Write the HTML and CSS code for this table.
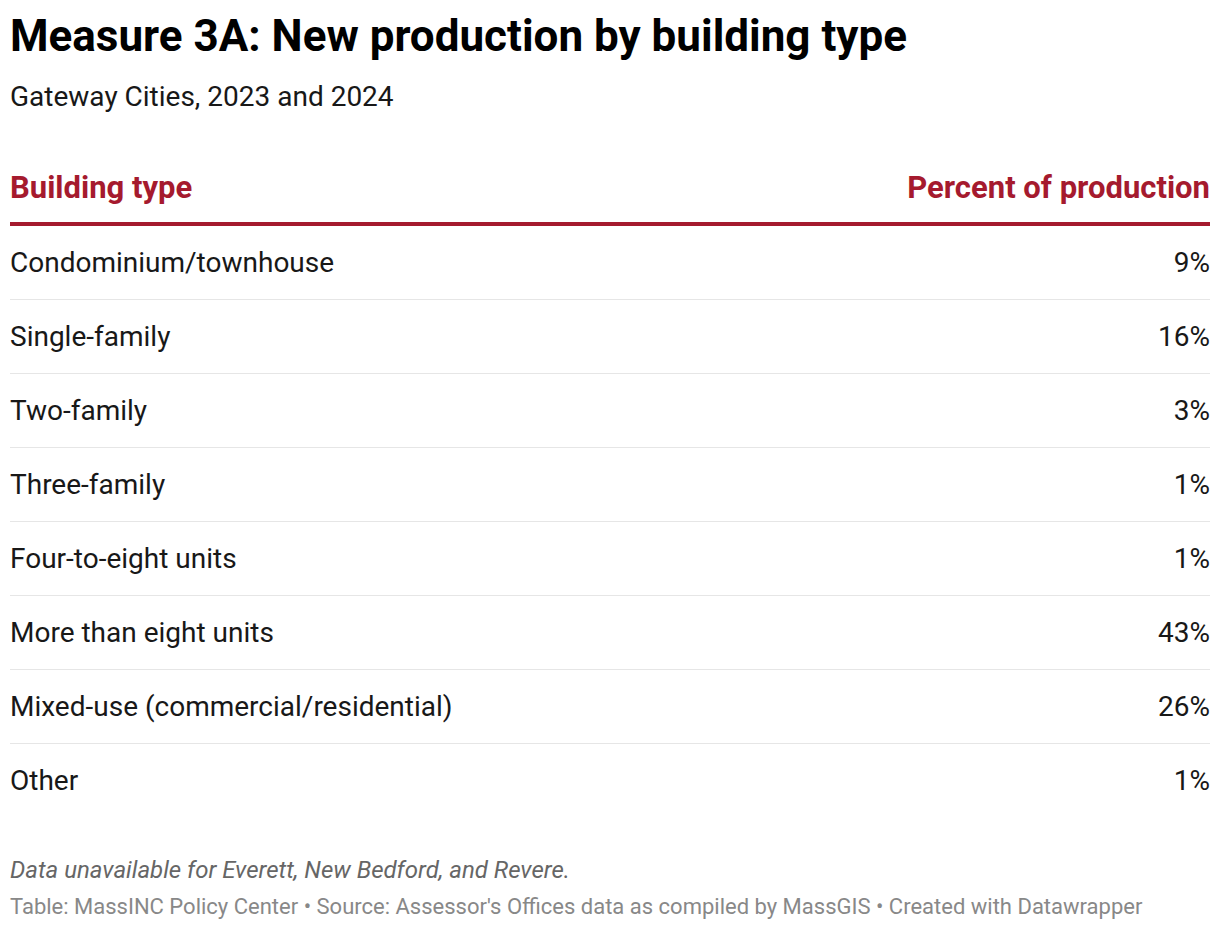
FILE: index.html
```html
<!DOCTYPE html>
<html lang="en">
<head>
<meta charset="utf-8">
<title>Measure 3A</title>
<link rel="stylesheet" href="styles.css">
</head>
<body>
<div class="chart">
  <h1 class="title">Measure 3A: New production by building type</h1>
  <p class="subtitle">Gateway Cities, 2023 and 2024</p>
  <table class="table">
    <thead>
      <tr><th class="left">Building type</th><th class="right">Percent of production</th></tr>
    </thead>
    <tbody>
      <tr><td>Condominium/townhouse</td><td class="right">9%</td></tr>
      <tr><td>Single-family</td><td class="right">16%</td></tr>
      <tr><td>Two-family</td><td class="right">3%</td></tr>
      <tr><td>Three-family</td><td class="right">1%</td></tr>
      <tr><td>Four-to-eight units</td><td class="right">1%</td></tr>
      <tr><td>More than eight units</td><td class="right">43%</td></tr>
      <tr><td>Mixed-use (commercial/residential)</td><td class="right">26%</td></tr>
      <tr><td>Other</td><td class="right">1%</td></tr>
    </tbody>
  </table>
  <p class="note">Data unavailable for Everett, New Bedford, and Revere.</p>
  <p class="source">Table: MassINC Policy Center • Source: Assessor's Offices data as compiled by MassGIS • Created with Datawrapper</p>
</div>
</body>
</html>
```

FILE: styles.css
```css
html, body {
  margin: 0;
  padding: 0;
  background: #fff;
}
body {
  font-family: Roboto, "Liberation Sans", sans-serif;
  color: #181818;
}
.chart {
  padding: 10px 10px 0 10px;
}
.title {
  margin: 0;
  font-size: 44px;
  line-height: 52px;
  font-weight: 700;
  color: #000;
}
.subtitle {
  margin: 18px 0 0 0;
  font-size: 28px;
  line-height: 34px;
  color: #181818;
}
.table {
  width: 100%;
  border-collapse: collapse;
  margin-top: 57px;
}
.table th {
  font-size: 31px;
  font-weight: 700;
  color: #a51a2e;
  line-height: 34px;
  padding: 0 0 17px 0;
  border-bottom: 4px solid #a51a2e;
}
.table td {
  font-size: 28px;
  line-height: 34px;
  padding: 20px 0 19px 0;
  border-bottom: 1px solid #e6e6e6;
}
.table tbody tr:last-child td {
  border-bottom: none;
}
.left { text-align: left; }
.right { text-align: right; }
.note {
  margin: 39px 0 0 0;
  font-size: 24px;
  line-height: 28px;
  font-style: italic;
  color: #666;
}
.source {
  margin: 10px 0 0 0;
  font-size: 22px;
  line-height: 26px;
  color: #888;
}
```
